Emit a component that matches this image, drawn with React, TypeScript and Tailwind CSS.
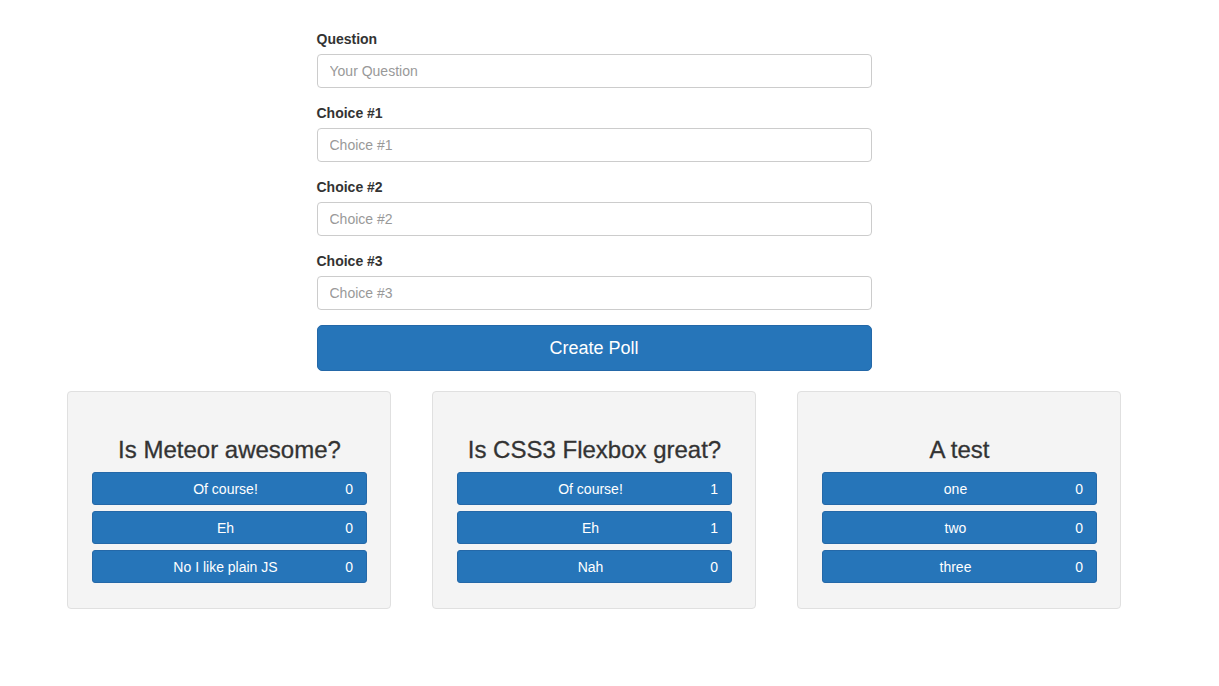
import React from 'react';

type Poll = { question: string; choices: { text: string; votes: number }[] };

const polls: Poll[] = [
  {
    question: 'Is Meteor awesome?',
    choices: [
      { text: 'Of course!', votes: 0 },
      { text: 'Eh', votes: 0 },
      { text: 'No I like plain JS', votes: 0 },
    ],
  },
  {
    question: 'Is CSS3 Flexbox great?',
    choices: [
      { text: 'Of course!', votes: 1 },
      { text: 'Eh', votes: 1 },
      { text: 'Nah', votes: 0 },
    ],
  },
  {
    question: 'A test',
    choices: [
      { text: 'one', votes: 0 },
      { text: 'two', votes: 0 },
      { text: 'three', votes: 0 },
    ],
  },
];

const fields = [
  { label: 'Question', placeholder: 'Your Question' },
  { label: 'Choice #1', placeholder: 'Choice #1' },
  { label: 'Choice #2', placeholder: 'Choice #2' },
  { label: 'Choice #3', placeholder: 'Choice #3' },
];

const PollCard: React.FC<{ poll: Poll }> = ({ poll }) => (
  <div className="w-[324px] h-[218px] bg-[#f4f4f4] border border-[#e0e0e0] rounded-[4px] pt-[45px] pl-[24px] pr-[23px]">
    <h3 className="text-[24px] leading-[26px] text-[#333] text-center mb-[9px] [-webkit-text-stroke:0.3px_#333]">
      {poll.question}
    </h3>
    <div className="flex flex-col gap-[6px]">
      {poll.choices.map(choice => (
        <button
          key={choice.text}
          className="relative w-full h-[33px] bg-[#2675b9] border border-[#2468a8] rounded-[3px] text-white text-[14px] leading-[20px] text-center"
        >
          <span className="mr-[8px]">{choice.text}</span>
          <span className="absolute right-[13px] top-[6px]">{choice.votes}</span>
        </button>
      ))}
    </div>
  </div>
);

export default function App() {
  return (
    <div className="min-h-screen bg-white font-['Liberation_Sans',Arial,sans-serif] text-[#333]">
      <div className="w-[1054px] ml-[67px]">
        {/* Poll form */}
        <form className="w-[555px] mx-auto pt-[29px]" onSubmit={e => e.preventDefault()}>
          {fields.map(field => (
            <div key={field.label} className="mb-[15px]">
              <label className="block text-[14px] leading-[20px] font-bold mb-[5px]">{field.label}</label>
              <input
                type="text"
                placeholder={field.placeholder}
                className="block w-full h-[34px] px-[12px] text-[14px] border border-[#ccc] rounded-[4px] placeholder:text-[#999] outline-none"
              />
            </div>
          ))}
          <button
            type="submit"
            className="block w-full h-[46px] mt-[1px] bg-[#2675b9] border border-[#2468a8] rounded-[5px] text-white text-[18px] leading-[24px]"
          >
            Create Poll
          </button>
        </form>

        {/* Polls */}
        <div className="flex gap-[41px] mt-[20px]">
          {polls.map(poll => (
            <PollCard key={poll.question} poll={poll} />
          ))}
        </div>
      </div>
    </div>
  );
}
